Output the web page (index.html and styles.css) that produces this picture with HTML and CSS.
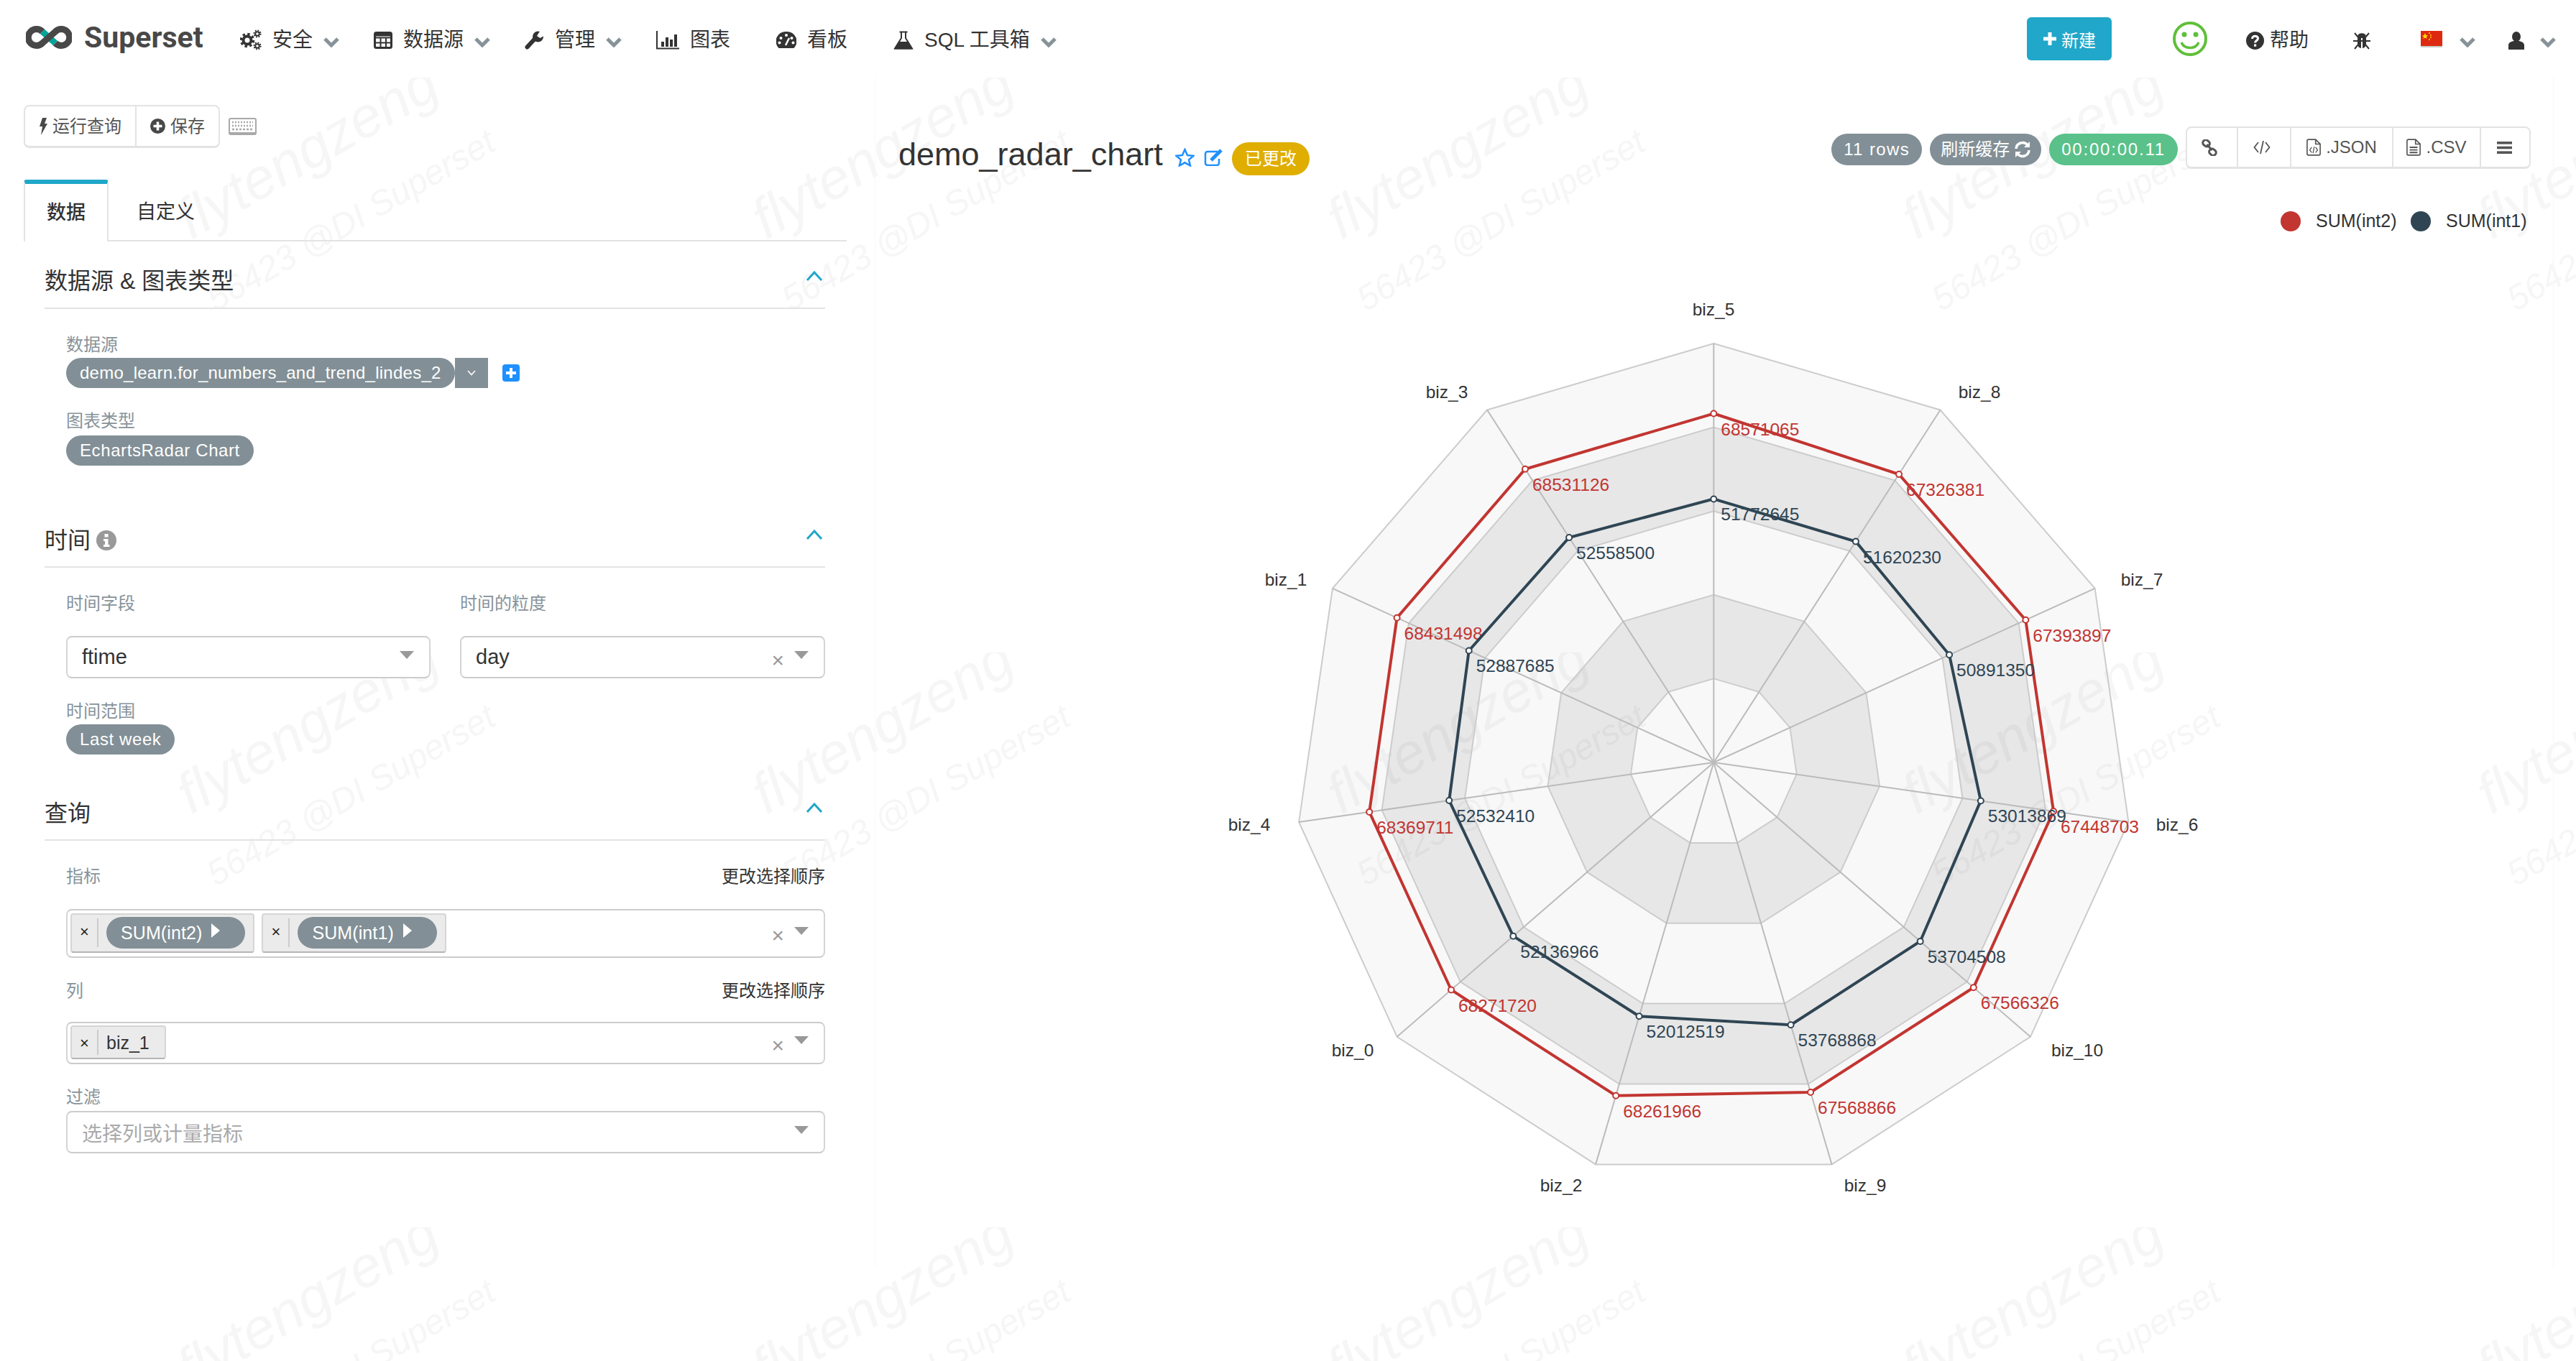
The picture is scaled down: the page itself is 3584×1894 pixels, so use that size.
FILE: index.html
```html
<html>
  <head>
    <title>demo_radar_chart - Superset</title>
    <meta charset="utf-8">
    <link rel="stylesheet" href="styles.css">
  </head>
  <body>
    <svg class="watermark" width="3584" height="1786">
      <defs>
        <pattern id="wm" patternUnits="userSpaceOnUse" width="800" height="800">
          <text class="wm-name" transform="translate(266 226) rotate(-30)">flytengzeng</text>
          <text class="wm-tag" transform="translate(300 326) rotate(-30)">56423 @DI Superset</text>
        </pattern>
      </defs>
      <rect width="3584" height="1786" fill="url(#wm)"></rect>
    </svg>

    <nav class="navbar">
      <a class="brand">
        <svg width="64" height="34" viewBox="0 0 64 34" fill="none" stroke-width="9">
          <path d="M23 9 L41 25" stroke="#00a699"></path>
          <path d="M23 9 A11.5 11.5 0 1 0 23 25 L41 9 A11.5 11.5 0 1 1 41 25" stroke="#484848"></path>
        </svg>
        <span class="brand-name">Superset</span>
      </a>

      <ul class="nav-menu">
        <li class="nav-item">
          <svg class="nav-icon" width="30" height="30" viewBox="0 0 30 30" fill="none" stroke="#333">
            <circle cx="10" cy="15" r="5.5" stroke-width="4"></circle>
            <circle cx="10" cy="15" r="8.6" stroke-width="3.4" stroke-dasharray="3.4 3.35"></circle>
            <circle cx="24" cy="6" r="2.8" stroke-width="2"></circle>
            <circle cx="24" cy="6" r="4.6" stroke-width="2" stroke-dasharray="1.8 1.8"></circle>
            <circle cx="24" cy="23" r="2.8" stroke-width="2"></circle>
            <circle cx="24" cy="23" r="4.6" stroke-width="2" stroke-dasharray="1.8 1.8"></circle>
          </svg>
          <span>安全</span>
          <svg class="chevron" width="22" height="15" viewBox="0 0 22 15"><path d="M2 3 L11 12 L20 3" fill="none" stroke="#879399" stroke-width="5"></path></svg>
        </li>
        <li class="nav-item">
          <svg class="nav-icon" width="26" height="26" viewBox="0 0 26 26" fill="none" stroke="#333">
            <rect x="1.5" y="2.5" width="23" height="21" rx="2" stroke-width="3"></rect>
            <path d="M1 9.5H25M1 16.5H25M9.5 9V24M17 9V24" stroke-width="2"></path>
            <path d="M2 5H24" stroke-width="5"></path>
          </svg>
          <span>数据源</span>
          <svg class="chevron" width="22" height="15" viewBox="0 0 22 15"><path d="M2 3 L11 12 L20 3" fill="none" stroke="#879399" stroke-width="5"></path></svg>
        </li>
        <li class="nav-item">
          <svg class="nav-icon" width="27" height="26" viewBox="0 0 27 26">
            <path d="M3.5 22.5 L15 10" stroke="#333" stroke-width="6" stroke-linecap="round"></path>
            <circle cx="18.5" cy="8" r="7.5" fill="#333"></circle>
            <path d="M17 7 L22 -1 L30 5 L21.5 10 Z" fill="#fff"></path>
          </svg>
          <span>管理</span>
          <svg class="chevron" width="22" height="15" viewBox="0 0 22 15"><path d="M2 3 L11 12 L20 3" fill="none" stroke="#879399" stroke-width="5"></path></svg>
        </li>
        <li class="nav-item nav-item-plain">
          <svg class="nav-icon" width="32" height="26" viewBox="0 0 32 26" fill="#333">
            <path d="M1 0V24.5H32" fill="none" stroke="#333" stroke-width="2"></path>
            <rect x="7" y="15" width="4" height="7"></rect>
            <rect x="13" y="9" width="4" height="13"></rect>
            <rect x="19" y="12" width="4" height="10"></rect>
            <rect x="25" y="5" width="4" height="17"></rect>
          </svg>
          <span>图表</span>
        </li>
        <li class="nav-item nav-item-plain">
          <svg class="nav-icon" width="28" height="26" viewBox="0 0 28 26">
            <path d="M14 1 A13.5 13.5 0 0 1 24.5 24 H3.5 A13.5 13.5 0 0 1 14 1 Z" fill="#333"></path>
            <circle cx="14" cy="6" r="2" fill="#fff"></circle>
            <circle cx="6.5" cy="10" r="2" fill="#fff"></circle>
            <circle cx="21.5" cy="10" r="2" fill="#fff"></circle>
            <circle cx="4.5" cy="16.5" r="2" fill="#fff"></circle>
            <circle cx="23.5" cy="16.5" r="2" fill="#fff"></circle>
            <path d="M13 20 L18 10" stroke="#fff" stroke-width="2.5"></path>
          </svg>
          <span>看板</span>
        </li>
        <li class="nav-item">
          <svg class="nav-icon" width="28" height="26" viewBox="0 0 28 26">
            <path d="M8.5 1.5H19.5M11 1.5V10L2 24.5H26L17 10V1.5" fill="none" stroke="#333" stroke-width="2"></path>
            <path d="M7 15H21L26.5 25.5H1.5Z" fill="#333"></path>
          </svg>
          <span>SQL 工具箱</span>
          <svg class="chevron" width="22" height="15" viewBox="0 0 22 15"><path d="M2 3 L11 12 L20 3" fill="none" stroke="#879399" stroke-width="5"></path></svg>
        </li>
      </ul>

      <div class="nav-right">
        <a class="btn-new">
          <svg width="20" height="20" viewBox="0 0 20 20"><path d="M10 1V19M1 10H19" stroke="#fff" stroke-width="5"></path></svg>
          <span>新建</span>
        </a>
        <svg class="smiley" width="48" height="48" viewBox="0 0 48 48" fill="none" stroke="#5fbf3a">
          <circle cx="24" cy="24" r="22" stroke-width="4"></circle>
          <circle cx="16" cy="18" r="3.5" fill="#5fbf3a" stroke="none"></circle>
          <circle cx="32" cy="18" r="3.5" fill="#5fbf3a" stroke="none"></circle>
          <path d="M12 29 C16 39 32 39 36 29" stroke-width="3.5"></path>
        </svg>
        <a class="nav-help">
          <svg width="25" height="25" viewBox="0 0 25 25">
            <circle cx="12.5" cy="12.5" r="12.5" fill="#333"></circle>
            <path d="M8.5 10 C8.5 5 16.5 5 16.5 9.5 C16.5 12.5 12.5 12.5 12.5 15.5" fill="none" stroke="#fff" stroke-width="3"></path>
            <rect x="11" y="17.5" width="3.2" height="3.2" fill="#fff"></rect>
          </svg>
          <span>帮助</span>
        </a>
        <svg class="nav-bug" width="24" height="26" viewBox="0 0 24 26" fill="none" stroke="#333" stroke-width="2">
          <path d="M2 3 L7 9 H17 L22 3 M0 14 H24 M2 25 L7 19 M22 25 L17 19"></path>
          <path d="M7 8 C7 3 17 3 17 8 Z" fill="#333"></path>
          <path d="M6 10 H11 V24 C8 24 6 21 6 17 Z M13 10 H18 V17 C18 21 16 24 13 24 Z" fill="#333" stroke="none"></path>
        </svg>
        <svg class="nav-flag" width="30" height="24" viewBox="0 0 30 24">
          <rect width="30" height="22" y="1" fill="#de2910"></rect>
          <rect width="30" height="2" y="22" fill="#c9c9c9"></rect>
          <path d="M6 4 L7.2 7 L10 7.4 L7.8 9.2 L8.6 12 L6 10.4 L3.4 12 L4.2 9.2 L2 7.4 L4.8 7 Z" fill="#ffde00"></path>
          <circle cx="12" cy="4" r="1" fill="#ffde00"></circle>
          <circle cx="14" cy="7" r="1" fill="#ffde00"></circle>
          <circle cx="14" cy="10" r="1" fill="#ffde00"></circle>
          <circle cx="12" cy="13" r="1" fill="#ffde00"></circle>
        </svg>
        <svg class="chevron chevron-flag" width="22" height="15" viewBox="0 0 22 15"><path d="M2 3 L11 12 L20 3" fill="none" stroke="#879399" stroke-width="5"></path></svg>
        <svg class="nav-user" width="22" height="25" viewBox="0 0 22 25" fill="#333">
          <ellipse cx="11" cy="7" rx="6" ry="7"></ellipse>
          <path d="M0 25 V19 C0 15 4 14 7 13 H15 C18 14 22 15 22 19 V25 Z"></path>
        </svg>
        <svg class="chevron chevron-user" width="22" height="15" viewBox="0 0 22 15"><path d="M2 3 L11 12 L20 3" fill="none" stroke="#879399" stroke-width="5"></path></svg>
      </div>
    </nav>

    <main class="explore">
      <section class="control-pane">
        <div class="query-bar">
          <div class="btn-group">
            <a class="run-btn">
              <svg width="12" height="24" viewBox="0 0 12 24"><path d="M5 0 H11 L8 8 H12 L3 24 L5 12 H1 Z" fill="#484848"></path></svg>
              <span>运行查询</span>
            </a>
            <a class="run-btn">
              <svg width="21" height="21" viewBox="0 0 21 21">
                <circle cx="10.5" cy="10.5" r="10.5" fill="#484848"></circle>
                <path d="M10.5 4.5V16.5M4.5 10.5H16.5" stroke="#fff" stroke-width="3.5"></path>
              </svg>
              <span>保存</span>
            </a>
          </div>
          <svg class="keyboard" width="39" height="24" viewBox="0 0 39 24" fill="none" stroke="#a9a9a9">
            <rect x="1" y="1" width="37" height="22" rx="2" stroke-width="2"></rect>
            <path d="M5 6H34M5 11H34" stroke-width="2.5" stroke-dasharray="2 2"></path>
            <path d="M5 16H34" stroke-width="2.5" stroke-dasharray="3 2"></path>
            <path d="M2 21.5H37" stroke-width="3"></path>
          </svg>
        </div>

        <div class="tabs">
          <a class="tab tab-active">数据</a>
          <a class="tab">自定义</a>
        </div>

        <div class="section-head section-head-first">
          <h4>数据源 &amp; 图表类型</h4>
          <svg class="caret-up" width="24" height="14" viewBox="0 0 24 14"><path d="M2 13 L12 2 L22 13" fill="none" stroke="#20a7c9" stroke-width="3"></path></svg>
        </div>
        <div class="section-body">
          <div class="field field-first">
            <div class="field-label tight">数据源</div>
            <div class="source-row">
              <span class="pill pill-source">demo_learn.for_numbers_and_trend_lindes_2</span>
              <span class="source-caret">
                <svg width="12" height="8" viewBox="0 0 12 8"><path d="M1 1 L6 6.5 L11 1" fill="none" stroke="#fff" stroke-width="1.6"></path></svg>
              </span>
              <svg class="source-add" width="24" height="24" viewBox="0 0 24 24">
                <rect width="24" height="24" rx="4" fill="#1e90ff"></rect>
                <path d="M12 5V19M5 12H19" stroke="#fff" stroke-width="4"></path>
              </svg>
            </div>
          </div>
          <div class="field">
            <div class="field-label tight-more">图表类型</div>
            <span class="pill">EchartsRadar Chart</span>
          </div>
        </div>

        <div class="section-head">
          <h4>时间
            <svg class="info" width="28" height="28" viewBox="0 0 28 28">
              <circle cx="14" cy="14" r="14" fill="#999"></circle>
              <rect x="11.5" y="5" width="5" height="4.5" fill="#fff"></rect>
              <path d="M10 12H16.5V20H18.5V23H10V20H12V15H10Z" fill="#fff"></path>
            </svg>
          </h4>
          <svg class="caret-up" width="24" height="14" viewBox="0 0 24 14"><path d="M2 13 L12 2 L22 13" fill="none" stroke="#20a7c9" stroke-width="3"></path></svg>
        </div>
        <div class="section-body">
          <div class="field-grid field-first">
            <div>
              <div class="field-label">时间字段</div>
              <div class="select">
                <span class="select-value">ftime</span>
                <i class="select-caret"></i>
              </div>
            </div>
            <div>
              <div class="field-label">时间的粒度</div>
              <div class="select">
                <span class="select-value">day</span>
                <span class="select-clear">×</span>
                <i class="select-caret"></i>
              </div>
            </div>
          </div>
          <div class="field">
            <div class="field-label tight">时间范围</div>
            <span class="pill">Last week</span>
          </div>
        </div>

        <div class="section-head section-head-query">
          <h4>查询</h4>
          <svg class="caret-up" width="24" height="14" viewBox="0 0 24 14"><path d="M2 13 L12 2 L22 13" fill="none" stroke="#20a7c9" stroke-width="3"></path></svg>
        </div>
        <div class="section-body">
          <div class="field field-first">
            <div class="field-label label-split"><span>指标</span><a>更改选择顺序</a></div>
            <div class="select select-multi">
              <div class="chip">
                <span class="chip-remove">×</span>
                <span class="pill pill-metric">SUM(int2)<i class="pill-arrow"></i></span>
              </div>
              <div class="chip">
                <span class="chip-remove">×</span>
                <span class="pill pill-metric">SUM(int1)<i class="pill-arrow"></i></span>
              </div>
              <span class="select-clear">×</span>
              <i class="select-caret"></i>
            </div>
          </div>
          <div class="field">
            <div class="field-label label-split label-short"><span>列</span><a>更改选择顺序</a></div>
            <div class="select select-multi select-short">
              <div class="chip">
                <span class="chip-remove">×</span>
                <span class="chip-text">biz_1</span>
              </div>
              <span class="select-clear">×</span>
              <i class="select-caret"></i>
            </div>
          </div>
          <div class="field">
            <div class="field-label tight-filter">过滤</div>
            <div class="select">
              <span class="select-placeholder">选择列或计量指标</span>
              <i class="select-caret"></i>
            </div>
          </div>
        </div>
      </section>

      <section class="chart-pane">
        <header class="chart-header">
          <div class="chart-title">
            <h1>demo_radar_chart</h1>
            <svg class="title-star" width="27" height="26" viewBox="0 0 27 26"><path d="M13.5 2 L17 10 L25.5 10.8 L19 16.4 L21 24.5 L13.5 20.3 L6 24.5 L8 16.4 L1.5 10.8 L10 10 Z" fill="none" stroke="#1e90ff" stroke-width="2.5"></path></svg>
            <svg class="title-edit" width="28" height="24" viewBox="0 0 28 24" fill="none" stroke="#1e90ff">
              <path d="M19 4 H5 A3 3 0 0 0 2 7 V20 A3 3 0 0 0 5 23 H18 A3 3 0 0 0 21 20 V14" stroke-width="2.5"></path>
              <path d="M10 16 L24 2" stroke-width="5"></path>
            </svg>
            <span class="pill pill-altered">已更改</span>
          </div>
          <div class="chart-actions">
            <span class="pill pill-status pill-rows">11 rows</span>
            <span class="pill pill-status pill-refresh">刷新缓存
              <svg width="22" height="24" viewBox="0 0 22 24" fill="none" stroke="#fff" stroke-width="3.5">
                <path d="M2 11 A9 9 0 0 1 18 6"></path>
                <path d="M20 13 A9 9 0 0 1 4 18"></path>
                <path d="M21 1 V9 H13 Z M1 23 V15 H9 Z" fill="#fff" stroke="none"></path>
              </svg>
            </span>
            <span class="pill pill-status pill-timer">00:00:00.11</span>
            <div class="btn-group action-group">
              <a class="action action-link">
                <svg width="22" height="23" viewBox="0 0 24 26" fill="none" stroke="#555" stroke-width="3.4">
                  <rect x="1.5" y="1.5" width="11" height="9" rx="4" transform="rotate(40 7 6)"></rect>
                  <rect x="11.5" y="15.5" width="11" height="9" rx="4" transform="rotate(40 17 20)"></rect>
                  <path d="M8 8 L16 17"></path>
                </svg>
              </a>
              <a class="action action-code">
                <svg width="24" height="20" viewBox="0 0 24 20" fill="none" stroke="#555" stroke-width="1.8">
                  <path d="M7 3 L1.5 10 L7 17 M17 3 L22.5 10 L17 17 M14 1 L10 19"></path>
                </svg>
              </a>
              <a class="action action-json">
                <svg width="20" height="24" viewBox="0 0 22 26" fill="none" stroke="#555" stroke-width="1.8">
                  <path d="M14 1 H3 A2 2 0 0 0 1 3 V23 A2 2 0 0 0 3 25 H19 A2 2 0 0 0 21 23 V8 Z M14 1 V8 H21"></path>
                  <path d="M8 13 L5 17 L8 21 M14 13 L17 17 L14 21 M12 12 L10 22" stroke-width="1.4"></path>
                </svg>
                <span>.JSON</span>
              </a>
              <a class="action action-csv">
                <svg width="20" height="24" viewBox="0 0 22 26" fill="none" stroke="#555" stroke-width="1.8">
                  <path d="M14 1 H3 A2 2 0 0 0 1 3 V23 A2 2 0 0 0 3 25 H19 A2 2 0 0 0 21 23 V8 Z M14 1 V8 H21"></path>
                  <path d="M5 13H17M5 17H17M5 21H17" stroke-width="2"></path>
                </svg>
                <span>.CSV</span>
              </a>
              <a class="action action-menu">
                <svg width="21" height="17" viewBox="0 0 21 17" fill="#555">
                  <rect width="21" height="3.6"></rect>
                  <rect y="6.7" width="21" height="3.6"></rect>
                  <rect y="13.4" width="21" height="3.6"></rect>
                </svg>
              </a>
            </div>
          </div>
        </header>

        <svg id="radar" class="radar" width="2334" height="1500" viewBox="1218 264 2334 1500"></svg>
      </section>
    </main>

    <script src="chart.js"></script>
  </body>
</html>
```

FILE: styles.css
```css
html, body {
  margin: 0;
  padding: 0;
  background-color: #fff;
  color: #333;
  font-family: "Liberation Sans", "Noto Sans CJK SC", sans-serif;
  font-size: 24px;
}

a {
  color: inherit;
  text-decoration: none;
}

svg {
  display: block;
  flex: none;
}

.watermark {
  position: absolute;
  top: 108px;
  left: 0;
  z-index: 0;
}

.wm-name {
  font-family: "Liberation Sans", sans-serif;
  font-style: italic;
  font-size: 79px;
  fill: rgba(0, 0, 0, 0.035);
}

.wm-tag {
  font-family: "Liberation Sans", sans-serif;
  font-style: italic;
  font-size: 48.5px;
  fill: rgba(0, 0, 0, 0.035);
}

/* top bar */
.navbar {
  position: relative;
  z-index: 1;
  display: flex;
  align-items: center;
  height: 108px;
  padding: 4px 28px 0 36px;
  box-sizing: border-box;
}

.brand {
  display: flex;
  align-items: center;
  gap: 17px;
  width: 298px;
  margin-top: -8px;
}

.brand-name {
  font-family: Roboto, "Liberation Sans", sans-serif;
  font-weight: 700;
  font-size: 41px;
  color: #484848;
}

.nav-menu {
  display: flex;
  align-items: center;
  gap: 48px;
  list-style: none;
  margin: 0;
  padding: 0;
}

.nav-item {
  display: flex;
  align-items: center;
  font-size: 28px;
  line-height: 40px;
}

.nav-icon {
  margin-right: 15px;
}

.chevron {
  margin-left: 15px;
  margin-top: 4px;
}

.nav-item-plain {
  margin-right: 16px;
}

.nav-right {
  display: flex;
  align-items: center;
  margin-left: auto;
}

.btn-new {
  display: flex;
  align-items: center;
  justify-content: center;
  gap: 6px;
  width: 118px;
  height: 60px;
  margin-top: -4px;
  border-radius: 6px;
  background-color: #20a7c9;
  color: #fff;
  font-size: 24px;
}

.smiley {
  margin-left: 85px;
  margin-top: -4px;
}

.nav-help {
  display: flex;
  align-items: center;
  gap: 8px;
  margin-left: 54px;
  font-size: 27px;
  line-height: 40px;
}

.nav-bug {
  margin-left: 62px;
}

.nav-flag {
  margin-left: 70px;
  margin-top: -4px;
}

.chevron-flag {
  margin-left: 24px;
}

.nav-user {
  margin-left: 46px;
}

.chevron-user {
  margin-left: 22px;
}

/* page body */
.explore {
  position: relative;
  z-index: 1;
  display: flex;
}

.control-pane {
  width: 1217px;
  padding: 38px 39px 0 33px;
  box-sizing: border-box;
}

.query-bar {
  display: flex;
  align-items: center;
  gap: 12px;
}

.btn-group {
  display: flex;
  height: 60px;
  box-sizing: border-box;
  border: 2px solid #e3e3e3;
  border-bottom-width: 3px;
  border-radius: 8px;
  background-color: #fff;
}

.run-btn {
  display: flex;
  align-items: center;
  gap: 7px;
  padding: 0 19px;
  color: #555;
  line-height: 30px;
}

.run-btn + .run-btn {
  border-left: 2px solid #e3e3e3;
}

.tabs {
  display: flex;
  height: 86px;
  margin-top: 44px;
  box-sizing: border-box;
  border-bottom: 2px solid #e3e3e3;
}

.tab {
  height: 84px;
  padding: 0 39px;
  font-size: 27px;
  line-height: 90px;
}

.tab-active {
  width: 118px;
  height: 86px;
  padding: 0;
  box-sizing: border-box;
  border: 2px solid #e3e3e3;
  border-top: 6px solid #20a7c9;
  border-bottom: none;
  border-radius: 4px 4px 0 0;
  background-color: #fff;
  font-weight: 500;
  line-height: 80px;
  text-align: center;
}

.section-head {
  display: flex;
  justify-content: space-between;
  height: 68px;
  margin: 74px 0 0 29px;
  width: 1086px;
  box-sizing: border-box;
  border-bottom: 2px solid #e3e3e3;
  padding-bottom: 8px;
}

.section-head-first {
  margin-top: 26px;
}

.section-head-query {
  margin-top: 52px;
}

.section-head h4 {
  display: flex;
  align-items: center;
  gap: 8px;
  margin: 2px 0 0;
  font-size: 32px;
  font-weight: 400;
  line-height: 60px;
}

.section-head-first h4 {
  margin-top: 0;
}

.info {
  margin-top: 0;
}

.caret-up {
  margin-top: 15px;
  margin-right: 3px;
}

.section-body {
  margin-left: 59px;
  width: 1056px;
}

.field {
  margin-top: 31px;
}

.field-first {
  margin-top: 35px;
}

.field-label {
  height: 30px;
  margin-bottom: 30px;
  color: #879399;
  font-size: 24px;
  line-height: 30px;
}

.field-label.tight {
  margin-bottom: 3px;
}

.field-label.tight-more {
  margin-bottom: 5px;
}

.field-label.tight-filter {
  margin-top: 2px;
  margin-bottom: 4px;
}

.label-split {
  display: flex;
  justify-content: space-between;
}

.label-split a {
  color: #333;
}

.field-grid {
  display: grid;
  grid-template-columns: 507px 508px;
  column-gap: 41px;
}

.source-row {
  display: flex;
  align-items: center;
}

.pill {
  display: inline-block;
  height: 42px;
  padding: 0 19px;
  box-sizing: border-box;
  border-radius: 21px;
  background-color: #828f96;
  color: #fff;
  font-size: 24px;
  letter-spacing: 0.6px;
  line-height: 42px;
  white-space: nowrap;
}

.pill-source {
  letter-spacing: 0.25px;
}

.source-caret {
  display: flex;
  align-items: center;
  justify-content: center;
  width: 46px;
  height: 42px;
  background-color: #828f96;
}

.source-add {
  margin-left: 20px;
}

.select {
  display: flex;
  align-items: center;
  height: 59px;
  padding-left: 20px;
  box-sizing: border-box;
  border: 2px solid #d5d5d5;
  border-top-color: #ccc;
  border-bottom-color: #ccc;
  border-radius: 8px;
  background-color: #fff;
  font-size: 28px;
}

.select-value {
  font-size: 29px;
}

.select-multi {
  height: 68px;
  gap: 10px;
  padding-left: 4px;
  padding-bottom: 2px;
}

.select-short {
  height: 59px;
  margin-bottom: 2px;
}

.label-short {
  margin-bottom: 28px;
}

.select-placeholder {
  color: #aaa;
}

.select-clear {
  margin-left: auto;
  margin-top: 8px;
  color: #999;
  font-size: 30px;
  line-height: 30px;
}

.select-caret {
  width: 0;
  height: 0;
  margin: -6px 21px 0 auto;
  border-top: 11px solid #999;
  border-left: 10px solid transparent;
  border-right: 10px solid transparent;
}

.select-clear + .select-caret {
  margin-left: 14px;
}

.select-multi .select-clear + .select-caret {
  margin-left: 4px;
}

.chip {
  display: flex;
  align-items: center;
  padding-right: 11px;
  box-sizing: border-box;
  height: 55px;
  border: 2px solid #d5d5d5;
  border-bottom-color: #b5b5b5;
  border-radius: 4px;
  background-color: #ebebeb;
}

.select-short .chip {
  height: 47px;
  padding-right: 21px;
}

.chip-remove {
  width: 37px;
  height: 80%;
  box-sizing: border-box;
  border-right: 2px solid #ccc;
  color: #222;
  font-size: 22px;
  line-height: 38px;
  text-align: center;
}

.chip-text {
  margin-left: 11px;
  font-size: 25px;
  line-height: 40px;
}

.pill-metric {
  display: flex;
  align-items: center;
  height: 44px;
  margin-left: 11px;
  padding: 0 35px 0 20px;
  border-radius: 22px;
  font-size: 25px;
  letter-spacing: 0.1px;
}

.pill-arrow {
  width: 0;
  height: 0;
  margin: -6px 0 0 13px;
  border-left: 12px solid #fff;
  border-top: 10px solid transparent;
  border-bottom: 10px solid transparent;
}

/* chart side */
.chart-pane {
  width: 2336px;
  box-sizing: border-box;
  border-left: 1px solid #f8f8f8;
  border-right: 1px solid #f8f8f8;
}

.chart-header {
  display: flex;
  justify-content: space-between;
  padding: 68px 31px 0 32px;
}

.chart-title {
  display: flex;
  align-items: center;
  height: 60px;
  margin-top: 9px;
}

.chart-title h1 {
  margin: 0;
  font-size: 45px;
  font-weight: 400;
  line-height: 60px;
  color: #333;
}

.title-star {
  margin-left: 17px;
  margin-top: 8px;
}

.title-edit {
  margin-left: 13px;
  margin-top: 8px;
}

.pill-altered {
  height: 46px;
  margin-left: 11px;
  margin-top: 12px;
  padding: 0 18px;
  border-radius: 23px;
  background-color: #dfae00;
  letter-spacing: 0.2px;
  line-height: 46px;
}

.chart-actions {
  display: flex;
  align-items: flex-start;
  height: 59px;
}

.pill-status {
  display: flex;
  align-items: center;
  height: 44px;
  margin-top: 10px;
  margin-right: 11px;
  padding: 0 17px;
  border-radius: 22px;
  letter-spacing: 1px;
}

.pill-rows {
  letter-spacing: 1.4px;
}

.pill-refresh {
  gap: 7px;
  letter-spacing: 0;
  padding: 0 15px;
}

.pill-timer {
  background-color: #59c189;
  letter-spacing: 1.8px;
  padding: 0 17px;
}

.action-group {
  height: 59px;
}

.action {
  display: flex;
  align-items: center;
  justify-content: center;
  gap: 7px;
  box-sizing: border-box;
  border-right: 2px solid #e3e3e3;
  color: #555;
  font-size: 24px;
}

.action-link { width: 71px; padding-right: 8px; }
.action-code { width: 74px; padding-right: 6px; }
.action-json { width: 142px; }
.action-csv { width: 122px; }
.action-menu { width: 67px; border-right: none; padding-right: 3px; }

.radar {
  margin-top: 19px;
}

.radar text {
  font-family: "Liberation Sans", sans-serif;
  font-size: 24.5px;
}

.radar .legend-text {
  font-size: 25px;
}
```

FILE: chart.js
```javascript
// radar is drawn in page coordinates, see viewBox on #radar
var NS = "http://www.w3.org/2000/svg";
var svg = document.getElementById("radar");

var cx = 2384.3;
var cy = 1061;
var outer = 583;
var scale = 7.08e-6;

var series = [
  { name: "SUM(int2)", color: "#c23531" },
  { name: "SUM(int1)", color: "#2f4554" }
];

// clockwise from the top, nx/ny is the centre of the axis name
var axes = [
  { name: "biz_5", nx: 2384, ny: 431, v: [68571065, 51772645] },
  { name: "biz_8", nx: 2754, ny: 546, v: [67326381, 51620230] },
  { name: "biz_7", nx: 2980, ny: 807, v: [67393897, 50891350] },
  { name: "biz_6", nx: 3029, ny: 1148, v: [67448703, 53013869] },
  { name: "biz_10", nx: 2890, ny: 1462, v: [67566326, 53704508] },
  { name: "biz_9", nx: 2595, ny: 1650, v: [67568866, 53768868] },
  { name: "biz_2", nx: 2172, ny: 1650, v: [68261966, 52012519] },
  { name: "biz_0", nx: 1882, ny: 1462, v: [68271720, 52136966] },
  { name: "biz_4", nx: 1738, ny: 1148, v: [68369711, 52532410] },
  { name: "biz_1", nx: 1789, ny: 807, v: [68431498, 52887685] },
  { name: "biz_3", nx: 2013, ny: 546, v: [68531126, 52558500] }
];

function el(tag, attrs, text) {
  var node = document.createElementNS(NS, tag);
  for (var key in attrs) {
    node.setAttribute(key, attrs[key]);
  }
  if (text) {
    node.textContent = text;
  }
  svg.appendChild(node);
  return node;
}

function point(i, r) {
  var a = (i * 2 * Math.PI) / axes.length;
  return [cx + r * Math.sin(a), cy - r * Math.cos(a)];
}

function ringPath(r) {
  var parts = axes.map(function (axis, i) {
    var p = point(i, r);
    return (i === 0 ? "M" : "L") + p[0].toFixed(1) + " " + p[1].toFixed(1);
  });
  return parts.join(" ") + " Z";
}

// bands, alternating from the centre
for (var b = 0; b < 5; b++) {
  var inner = (outer / 5) * b;
  var d = ringPath((outer / 5) * (b + 1)) + (b > 0 ? " " + ringPath(inner) : "");
  el("path", {
    d: d,
    "fill-rule": "evenodd",
    fill: b % 2 === 1 ? "rgba(0,0,0,0.095)" : "rgba(0,0,0,0.028)"
  });
}

for (var r = 1; r <= 5; r++) {
  el("path", { d: ringPath((outer / 5) * r), fill: "none", stroke: "#ccc", "stroke-width": 2 });
}

axes.forEach(function (axis, i) {
  var p = point(i, outer);
  el("line", { x1: cx, y1: cy, x2: p[0], y2: p[1], stroke: "#bbb", "stroke-width": 2 });
  el("text", { x: axis.nx, y: axis.ny + 8, "text-anchor": "middle", fill: "#333" }, axis.name);
});

series.forEach(function (s, k) {
  var pts = axes.map(function (axis, i) {
    return point(i, axis.v[k] * scale);
  });
  el("polygon", {
    points: pts.map(function (p) { return p[0].toFixed(1) + "," + p[1].toFixed(1); }).join(" "),
    fill: "none",
    stroke: s.color,
    "stroke-width": 4
  });
  pts.forEach(function (p) {
    el("circle", { cx: p[0], cy: p[1], r: 4, fill: "#fff", stroke: s.color, "stroke-width": 2 });
  });
  pts.forEach(function (p, i) {
    el("text", { x: p[0] + 10, y: p[1] + 30, fill: s.color }, String(axes[i].v[k]));
  });
});

// legend
el("circle", { cx: 3187, cy: 308, r: 14, fill: series[0].color });
el("text", { class: "legend-text", x: 3222, y: 316, fill: "#333" }, series[0].name);
el("circle", { cx: 3368, cy: 308, r: 14, fill: series[1].color });
el("text", { class: "legend-text", x: 3403, y: 316, fill: "#333" }, series[1].name);
```
